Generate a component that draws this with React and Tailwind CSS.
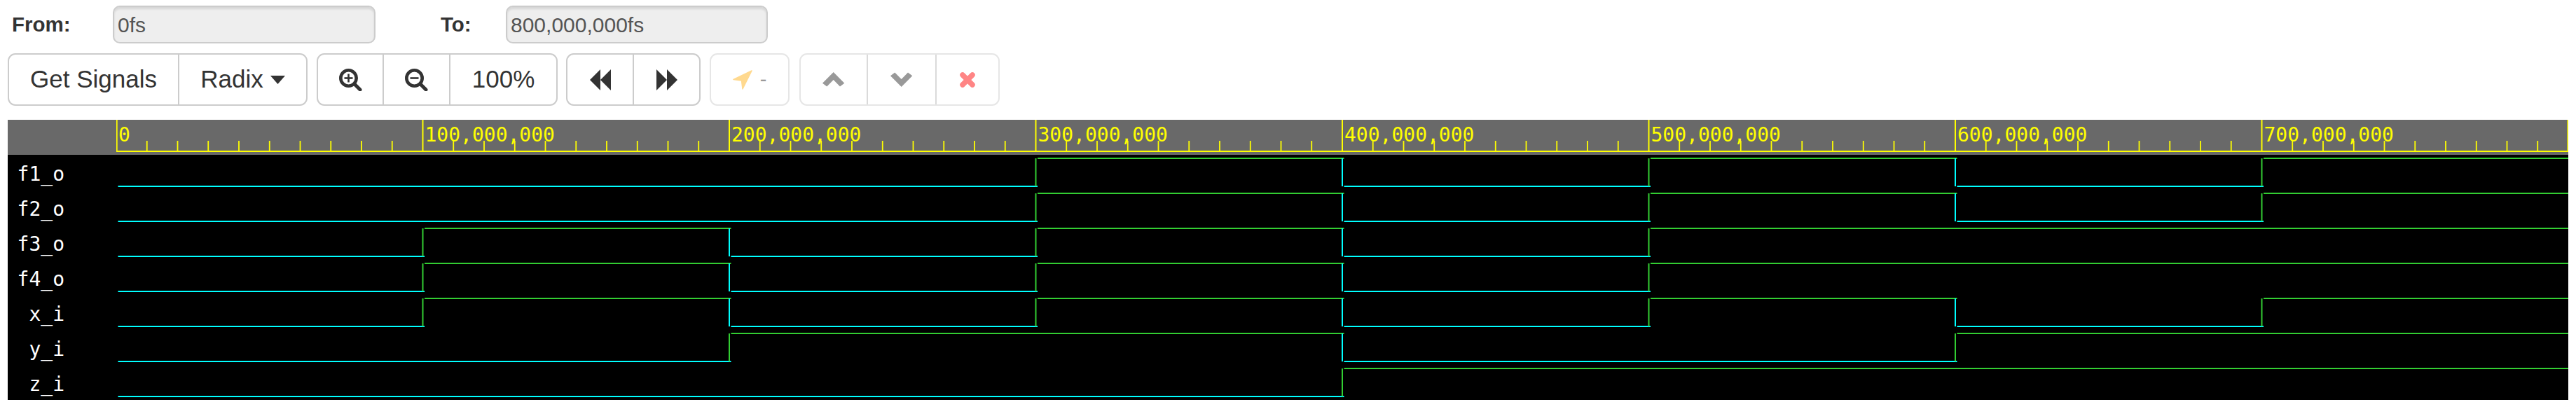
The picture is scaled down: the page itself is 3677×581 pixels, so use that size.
import React from 'react';

const STEP = 437.5;

const signals = [
  { name: 'f1_o', edges: [3, 4, 5, 6, 7] },
  { name: 'f2_o', edges: [3, 4, 5, 6, 7] },
  { name: 'f3_o', edges: [1, 2, 3, 4, 5] },
  { name: 'f4_o', edges: [1, 2, 3, 4, 5] },
  { name: 'x_i', edges: [1, 2, 3, 4, 5, 6, 7] },
  { name: 'y_i', edges: [2, 4, 6] },
  { name: 'z_i', edges: [4] },
];

const rulerLabels = ['0', '100,000,000', '200,000,000', '300,000,000', '400,000,000', '500,000,000', '600,000,000', '700,000,000'];

const ZoomIcon = ({ plus }) => (
  <svg width="33" height="32" viewBox="0 0 33 32" fill="none" stroke="#333333">
    <circle cx="13.5" cy="13.5" r="11.2" strokeWidth="4.6" />
    <path d="M22 22 L30 30" strokeWidth="5" strokeLinecap="round" />
    <path d="M7.5 13.5 H19.5" strokeWidth="2.6" />
    {plus && <path d="M13.5 7.5 V19.5" strokeWidth="2.6" />}
  </svg>
);

const Ruler = () => (
  <svg width="3500" height="50" viewBox="0 0 3500 50" className="block shrink-0">
    {rulerLabels.map((label, i) => (
      <text key={label} x={i * STEP + 3} y="31" fill="#ffff00" fontSize="28" fontFamily="'DejaVu Sans Mono', monospace">
        {label}
      </text>
    ))}
    <path d="M0 45 H3500" stroke="#ffff00" strokeWidth="2" />
    {Array.from({ length: 81 }, (_, i) => {
      const x = i === 80 ? 3499.5 : i * 43.75 + (i === 0 ? 0.7 : 0);
      const major = i % 10 === 0;
      return (
        <path
          key={i}
          d={`M${x} ${major ? 0 : 30} V46`}
          stroke="#ffff00"
          strokeWidth={major ? 2 : 1.8}
        />
      );
    })}
  </svg>
);

const Wave = ({ edges, row }) => {
  const low = row * 50 + 45;
  const high = row * 50 + 5;
  const points = [0, ...edges, 8];
  return (
    <g>
      {points.slice(0, -1).map((t, i) => {
        const isHigh = i % 2 === 1;
        const y = isHigh ? high : low;
        const color = isHigh ? '#32cd32' : '#00ffff';
        const x1 = t * STEP + 2.5;
        const x2 = Math.min(points[i + 1] * STEP + 2.5, 3500);
        return (
          <g key={t}>
            <path d={`M${x1} ${y} H${x2}`} stroke={color} strokeWidth="2" />
            {i > 0 && <path d={`M${t * STEP} ${high} V${low}`} stroke={color} strokeWidth="2" />}
          </g>
        );
      })}
    </g>
  );
};

const App = () => {
  const btn = 'flex h-full items-center justify-center';
  return (
    <div className="w-[3677px] h-[581px] overflow-hidden bg-white pt-2 px-[11px] font-['Liberation_Sans',Arial,sans-serif] text-[#333333]">
      <div className="flex h-[54px] items-center text-[29.5px]">
        <label className="w-[150px] pl-[6px] font-bold">From:</label>
        <div className="flex h-full w-[375px] items-center rounded-[10px] border-2 border-[#cccccc] bg-[#eeeeee] pl-[5px] text-[30px] text-[#555555] shadow-[inset_0_3px_3px_rgba(0,0,0,0.1)]">0fs</div>
        <label className="ml-[93px] w-[93px] font-bold">To:</label>
        <div className="flex h-full w-[374px] items-center rounded-[10px] border-2 border-[#cccccc] bg-[#eeeeee] pl-[5px] text-[30px] text-[#555555] shadow-[inset_0_3px_3px_rgba(0,0,0,0.1)]">800,000,000fs</div>
      </div>

      <div className="mt-[14px] flex h-[75px] text-[35px]">
        <div className="flex w-[428px] rounded-[11px] border-2 border-[#cccccc]">
          <div className={`${btn} w-[241px]`}>Get Signals</div>
          <div className={`${btn} flex-1 gap-[10px] border-l-2 border-[#cccccc]`}>
            Radix
            <svg width="21" height="12" viewBox="0 0 21 12"><path d="M0 0 H21 L10.5 12 Z" fill="#333333" /></svg>
          </div>
        </div>

        <div className="ml-[13px] flex w-[344px] rounded-[11px] border-2 border-[#cccccc]">
          <div className={`${btn} w-[92px]`}><ZoomIcon plus /></div>
          <div className={`${btn} w-[95px] border-l-2 border-[#cccccc]`}><ZoomIcon /></div>
          <div className={`${btn} flex-1 border-l-2 border-[#cccccc]`}>100%</div>
        </div>

        <div className="ml-[12px] flex w-[192px] rounded-[11px] border-2 border-[#cccccc]">
          <div className={`${btn} w-[93px]`}>
            <svg width="30" height="30" viewBox="0 0 30 30"><path d="M0 15 L15 0 V30 Z M15 15 L30 0 V30 Z" fill="#333333" /></svg>
          </div>
          <div className={`${btn} flex-1 border-l-2 border-[#cccccc]`}>
            <svg width="30" height="30" viewBox="0 0 30 30"><path d="M0 0 L15 15 L0 30 Z M15 0 L30 15 L15 30 Z" fill="#333333" /></svg>
          </div>
        </div>

        <div className="ml-[13px] flex w-[114px] items-center justify-center gap-[11px] rounded-[11px] border-2 border-[#e6e6e6]">
          <svg width="28" height="28" viewBox="0 0 28 28">
            <path d="M27 1 L1 13.5 L12.5 15 L14 27 Z" fill="#ffd98f" stroke="#ffd98f" strokeWidth="1.5" strokeLinejoin="round" />
          </svg>
          <span className="text-[29px] leading-none text-[#999999]">-</span>
        </div>

        <div className="ml-[14px] flex w-[286px] rounded-[11px] border-2 border-[#e6e6e6]">
          <div className={`${btn} w-[94px]`}>
            <svg width="32" height="21" viewBox="0 0 32 21"><path d="M15.7 0 L31.3 15.7 L25 20.5 L15.7 11 L6.3 20.5 L0 15.7 Z" fill="#999999" /></svg>
          </div>
          <div className={`${btn} w-[98px] border-l-2 border-[#dadada]`}>
            <svg width="32" height="21" viewBox="0 0 32 21"><path d="M15.7 21 L31.3 5.3 L25 0.5 L15.7 10 L6.3 0.5 L0 5.3 Z" fill="#999999" /></svg>
          </div>
          <div className={`${btn} flex-1 border-l-2 border-[#dadada]`}>
            <svg width="24" height="24" viewBox="0 0 24 24"><path d="M5 5 L19 19 M19 5 L5 19" stroke="#ff8585" strokeWidth="7.5" strokeLinecap="round" /></svg>
          </div>
        </div>
      </div>

      <div className="mt-[20px] w-[3655px] bg-black font-['DejaVu_Sans_Mono',monospace] text-[28px] text-white">
        <div className="flex h-[50px] bg-[#696969]">
          <div className="w-[155px] shrink-0" />
          <Ruler />
        </div>
        <div className="flex">
          <div className="w-[155px] shrink-0">
            {signals.map((s) => (
              <div key={s.name} className="flex h-[50px] items-center justify-end pr-[74px] pt-[6px]">{s.name}</div>
            ))}
          </div>
          <svg width="3500" height="350" viewBox="0 0 3500 350" className="block shrink-0">
            {signals.map((s, i) => <Wave key={s.name} edges={s.edges} row={i} />)}
          </svg>
        </div>
      </div>
    </div>
  );
};

export default App;
